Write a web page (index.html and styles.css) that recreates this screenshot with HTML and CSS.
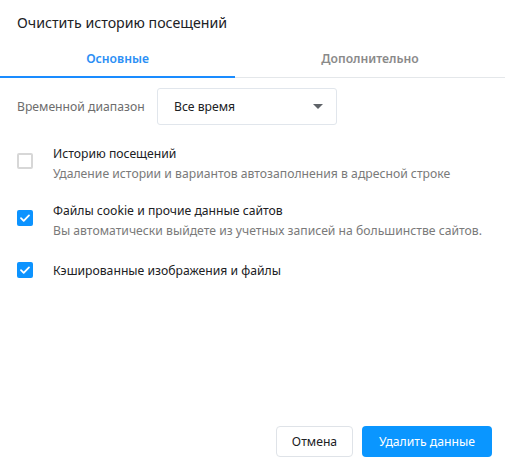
FILE: index.html
```html
<!DOCTYPE html>
<html lang="ru">
<head>
<meta charset="utf-8">
<link rel="stylesheet" href="styles.css">
</head>
<body>
<div class="dialog">
  <h1 class="title">Очистить историю посещений</h1>
  <div class="tabs">
    <div class="tab active">Основные</div>
    <div class="tab">Дополнительно</div>
  </div>
  <div class="range">
    <span class="range-label">Временной диапазон</span>
    <div class="select">
      <span>Все время</span>
      <svg class="arrow" width="10" height="5" viewBox="0 0 10 5"><path d="M0 0h10L5 5z" fill="#5f6368"/></svg>
    </div>
  </div>
  <div class="options">
    <div class="option">
      <span class="box"></span>
      <div class="texts">
        <div class="name">Историю посещений</div>
        <div class="desc">Удаление истории и вариантов автозаполнения в адресной строке</div>
      </div>
    </div>
    <div class="option">
      <span class="box checked"><svg width="16" height="16" viewBox="0 0 16 16"><path d="M4 8.2l2.7 2.6L12 5.4" fill="none" stroke="#fff" stroke-width="1.8" stroke-linecap="round" stroke-linejoin="round"/></svg></span>
      <div class="texts">
        <div class="name">Файлы cookie и прочие данные сайтов</div>
        <div class="desc">Вы автоматически выйдете из учетных записей на большинстве сайтов.</div>
      </div>
    </div>
    <div class="option single">
      <span class="box checked"><svg width="16" height="16" viewBox="0 0 16 16"><path d="M4 8.2l2.7 2.6L12 5.4" fill="none" stroke="#fff" stroke-width="1.8" stroke-linecap="round" stroke-linejoin="round"/></svg></span>
      <div class="texts">
        <div class="name">Кэшированные изображения и файлы</div>
      </div>
    </div>
  </div>
  <div class="buttons">
    <button class="btn cancel">Отмена</button>
    <button class="btn primary">Удалить данные</button>
  </div>
</div>
</body>
</html>
```
FILE: styles.css
```css
html, body {
  margin: 0;
  padding: 0;
  background: #fff;
}
body {
  font-family: "Noto Sans", "Open Sans", sans-serif;
  color: #202124;
}
.dialog {
  width: 505px;
  height: 473px;
  display: flex;
  flex-direction: column;
  box-sizing: border-box;
}
.title {
  margin: 0;
  padding: 13px 0 0 17px;
  height: 27px;
  font-size: 14.2px;
  font-weight: 400;
  line-height: 20px;
  color: #202124;
}
.tabs {
  display: grid;
  grid-template-columns: 235px 1fr;
  margin-top: 8px;
  border-bottom: 1px solid #e4e7ea;
}
.tab {
  text-align: center;
  font-size: 12.2px;
  font-weight: 600;
  color: #8a8a8a;
  height: 29px;
  line-height: 22px;
}
.tab.active {
  color: #2c8ff5;
  border-bottom: 2px solid #1a8cff;
  height: 28px;
  margin-bottom: -1px;
}
.range {
  display: flex;
  align-items: center;
  margin-top: 10px;
  padding-left: 17px;
}
.range-label {
  font-size: 12.2px;
  color: #6d6d6d;
  width: 140px;
}
.select {
  width: 180px;
  height: 37px;
  box-sizing: border-box;
  border: 1px solid #e1e6ec;
  border-radius: 3px;
  display: flex;
  align-items: center;
  justify-content: space-between;
  padding: 0 13px 0 16px;
  font-size: 12.2px;
  color: #202124;
}
.options {
  display: flex;
  flex-direction: column;
  padding-left: 17px;
  margin-top: 19px;
}
.option {
  display: flex;
  align-items: flex-start;
  gap: 20px;
  height: 38px;
  margin-bottom: 19px;
}
.option .box {
  margin-top: 9px;
}
.option.single {
  height: 20px;
  margin-top: 3px;
}
.option.single .box {
  margin-top: 1px;
}
.box {
  width: 16px;
  height: 16px;
  box-sizing: border-box;
  border: 2px solid #d7d7d7;
  border-radius: 2px;
  flex: none;
}
.box.checked {
  border: none;
  background: #0c93ff;
}
.box svg {
  display: block;
}
.name {
  font-size: 12.2px;
  line-height: 20px;
  color: #202124;
}
.desc {
  font-size: 12.2px;
  line-height: 19px;
  color: #7a7a7a;
}
.buttons {
  margin-top: auto;
  display: flex;
  justify-content: flex-end;
  gap: 9px;
  padding: 0 13px 16px 0;
}
.btn {
  font-family: "Noto Sans", "Open Sans", sans-serif;
  font-size: 12.2px;
  height: 31px;
  border-radius: 4px;
  cursor: pointer;
}
.cancel {
  width: 77px;
  background: #fff;
  border: 1px solid #dfe3e8;
  color: #202124;
}
.primary {
  width: 130px;
  background: #0a96ff;
  border: none;
  color: #fff;
}
```
